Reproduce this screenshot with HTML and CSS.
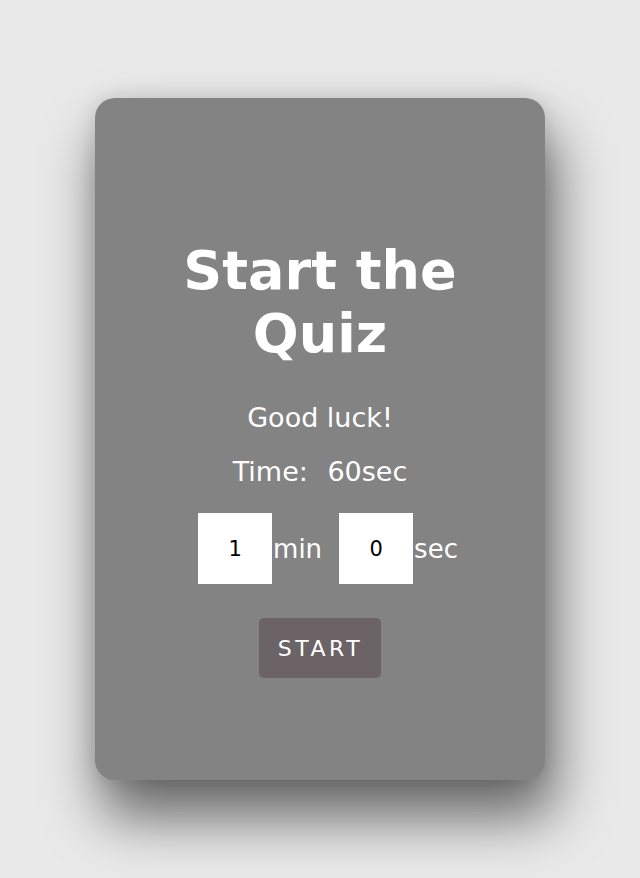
FILE: index.html
```html
<!DOCTYPE html>
<html>
<head>
<meta charset="utf-8">
<link rel="stylesheet" href="styles.css">
</head>
<body>
<main class="card">
  <h1 class="title">Start the Quiz</h1>
  <p class="line luck">Good luck!</p>
  <p class="line time">Time: <span class="value">60sec</span></p>
  <div class="timer">
    <input class="num" type="text" value="1"><span class="unit">min</span>
    <input class="num second" type="text" value="0"><span class="unit">sec</span>
  </div>
  <button class="start">START</button>
</main>
</body>
</html>
```
FILE: styles.css
```css
html, body {
  margin: 0;
  padding: 0;
  background: #e9e9e9;
  height: 100%;
}
body {
  font-family: "DejaVu Sans", Verdana, sans-serif;
  padding-top: 98px;
  box-sizing: border-box;
}
.card {
  width: 450px;
  height: 682px;
  margin: 0 auto;
  box-sizing: border-box;
  background: #838383;
  border-radius: 20px;
  box-shadow: 8px 36px 55px 2px rgba(0, 0, 0, 0.55), 0 0 22px rgba(0, 0, 0, 0.12);
  padding-top: 141px;
  display: flex;
  flex-direction: column;
  align-items: center;
  color: #fff;
}
.title {
  margin: 0;
  width: 300px;
  text-align: center;
  font-size: 54px;
  font-weight: bold;
  line-height: 63px;
}
.line {
  margin: 0;
  font-size: 27px;
  line-height: 31px;
}
.luck {
  margin-top: 37px;
}
.time {
  margin-top: 23px;
}
.value {
  margin-left: 11px;
}
.timer {
  margin-top: 26px;
  display: flex;
  align-items: center;
  margin-left: 16px;
}
.num {
  width: 74px;
  height: 71px;
  box-sizing: border-box;
  border: none;
  margin: 0;
  padding: 0;
  background: #fff;
  color: #000;
  text-align: center;
  font-family: "DejaVu Sans", Verdana, sans-serif;
  font-size: 21px;
}
.second {
  margin-left: 17px;
}
.unit {
  font-size: 26px;
  margin-left: 1px;
}
.start {
  margin-top: 34px;
  width: 122px;
  height: 60px;
  border: none;
  border-radius: 5px;
  background: #6b6365;
  color: #fff;
  font-family: "DejaVu Sans", Verdana, sans-serif;
  font-size: 22px;
  letter-spacing: 3.5px;
  padding: 0 0 0 1px;
}
```
